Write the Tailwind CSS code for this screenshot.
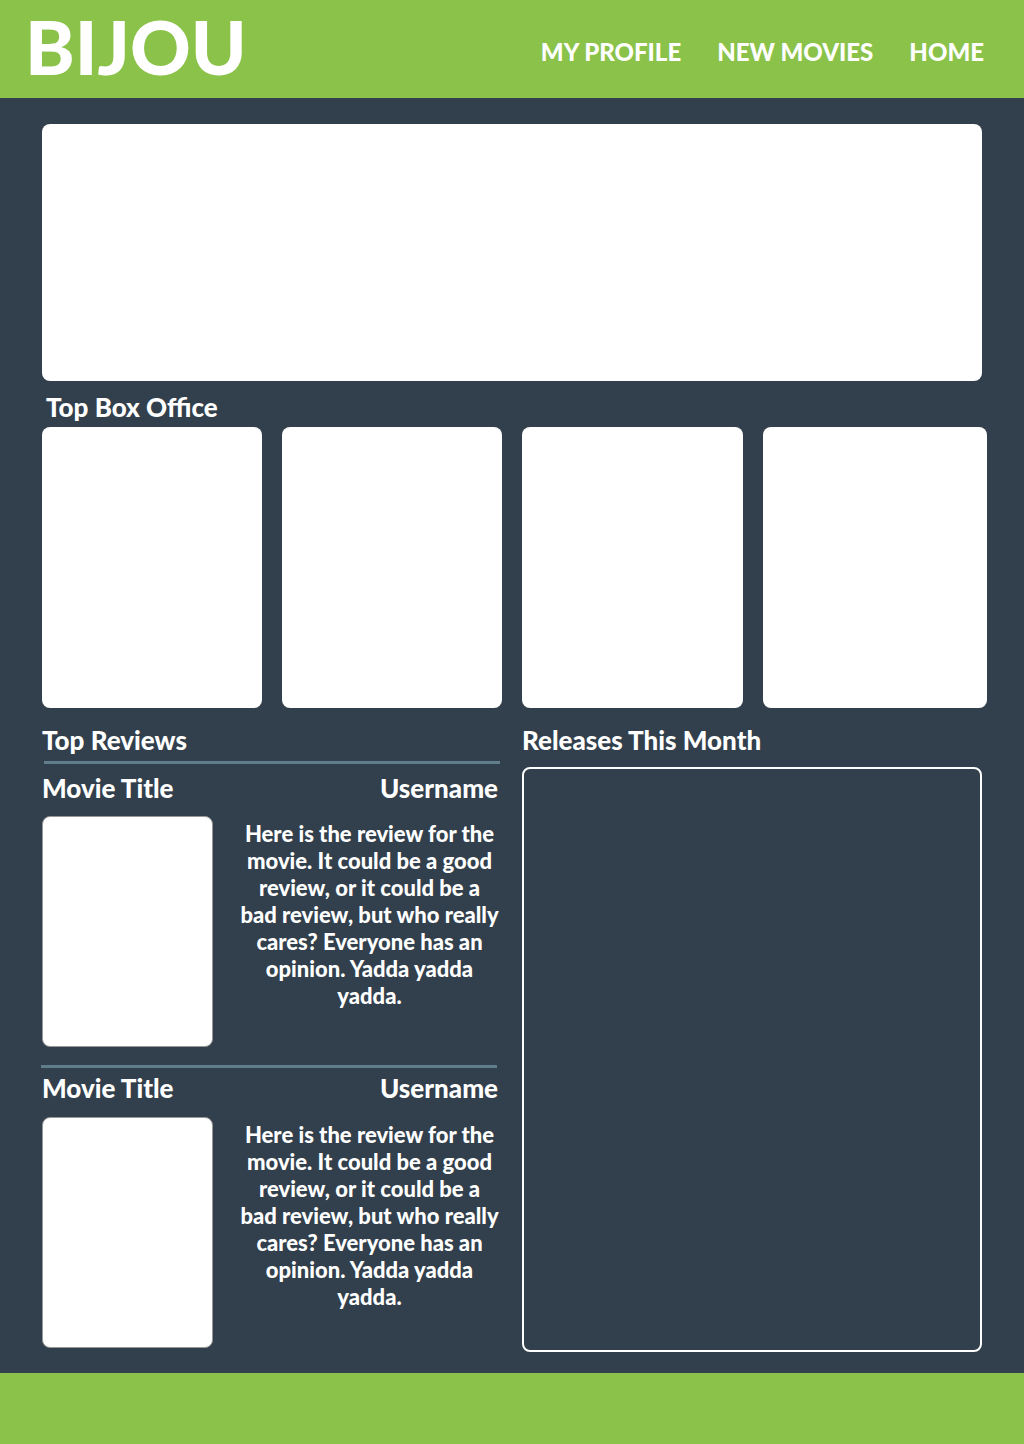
<!DOCTYPE html>
<html lang="en">
<head>
<meta charset="utf-8">
<meta name="viewport" content="width=device-width, initial-scale=1">
<title>Bijou</title>
<script src="https://cdn.jsdelivr.net/npm/@tailwindcss/browser@4"></script>
</head>
<body class="min-h-screen flex flex-col bg-[#323f4c] text-white font-['Lato',sans-serif] font-black">
<header class="flex h-[98px] items-center justify-between bg-[#8bc34a] pl-[25px] pr-10">
  <a href="#" class="pb-1.5 text-[75px] leading-[84px]">BIJOU</a>
  <nav class="flex gap-9 pt-1.5 text-2xl">
    <a href="#">MY PROFILE</a>
    <a href="#">NEW MOVIES</a>
    <a href="#">HOME</a>
  </nav>
</header>
<main class="grow pt-[26px] pb-[21px] pl-[42px]">
  <section class="mr-[42px] h-[257px] rounded-lg bg-white" aria-label="Featured"></section>
  <section class="mr-[37px]">
    <h2 class="pt-2.5 pb-1 pl-1 text-[26px] leading-8">Top Box Office</h2>
    <div class="grid h-[281px] grid-cols-[220fr_220fr_220fr_224fr] gap-5">
      <div class="rounded-lg bg-white"></div>
      <div class="rounded-lg bg-white"></div>
      <div class="rounded-lg bg-white"></div>
      <div class="rounded-lg bg-white"></div>
    </div>
  </section>
  <div class="mr-[42px] grid grid-cols-2 gap-5 pt-4">
    <section>
      <h2 class="text-[26px] leading-8">Top Reviews</h2>
      <hr class="mt-[5px] mr-0.5 ml-0.5 border-t-3 border-[#607d8b]">
      <article class="pt-2">
        <div class="flex justify-between pr-1 text-[26px] leading-8">
          <h3>Movie Title</h3>
          <p>Username</p>
        </div>
        <div class="mt-3 flex gap-[26px]">
          <div class="h-[231px] w-[171px] shrink-0 rounded-lg border border-[#979797] bg-white"></div>
          <p class="grow pt-1 pr-0.5 text-center text-[22px] leading-[27px]">Here is the review for the movie. It could be a good review, or it could be a bad review, but who really cares? Everyone has an opinion. Yadda yadda yadda.</p>
        </div>
      </article>
      <hr class="mt-[18px] mr-[5px] -ml-px border-t-3 border-[#607d8b]">
      <article class="pt-1">
        <div class="flex justify-between pr-1 text-[26px] leading-8">
          <h3>Movie Title</h3>
          <p>Username</p>
        </div>
        <div class="mt-[13px] flex gap-[26px]">
          <div class="h-[231px] w-[171px] shrink-0 rounded-lg border border-[#979797] bg-white"></div>
          <p class="grow pt-1 pr-0.5 text-center text-[22px] leading-[27px]">Here is the review for the movie. It could be a good review, or it could be a bad review, but who really cares? Everyone has an opinion. Yadda yadda yadda.</p>
        </div>
      </article>
    </section>
    <section class="-mb-1 flex flex-col">
      <h2 class="text-[26px] leading-8">Releases This Month</h2>
      <div class="mt-[11px] grow rounded-lg border-2 border-white"></div>
    </section>
  </div>
  <div class="h-1"></div>
</main>
<footer class="h-[71px] bg-[#8bc34a]"></footer>
</body>
</html>
